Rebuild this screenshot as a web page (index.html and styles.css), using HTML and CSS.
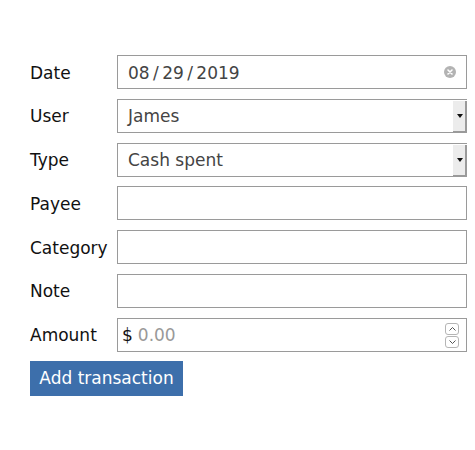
FILE: index.html
```html
<!DOCTYPE html>
<html lang="en">
<head>
<meta charset="utf-8">
<title>Add transaction</title>
<link rel="stylesheet" href="styles.css">
</head>
<body>
<form class="form">
  <div class="row">
    <label class="label">Date</label>
    <div class="field">
      <span class="value date">08 / 29 / 2019</span>
      <span class="clear">
        <svg width="12" height="12" viewBox="0 0 12 12"><circle cx="6" cy="6" r="6" fill="#b3b3b3"/><path d="M4 4L8 8M8 4L4 8" stroke="#fff" stroke-width="1.6" stroke-linecap="round"/></svg>
      </span>
    </div>
  </div>
  <div class="row">
    <label class="label">User</label>
    <div class="field select">
      <span class="value">James</span>
      <span class="drop"><span class="tri"></span></span>
    </div>
  </div>
  <div class="row">
    <label class="label">Type</label>
    <div class="field select">
      <span class="value">Cash spent</span>
      <span class="drop"><span class="tri"></span></span>
    </div>
  </div>
  <div class="row">
    <label class="label">Payee</label>
    <input class="field" type="text">
  </div>
  <div class="row">
    <label class="label">Category</label>
    <input class="field" type="text">
  </div>
  <div class="row">
    <label class="label">Note</label>
    <input class="field" type="text">
  </div>
  <div class="row">
    <label class="label">Amount</label>
    <div class="field amount">
      <span class="cur">$</span><span class="ph">0.00</span>
      <span class="spin">
        <span class="sbtn"><svg width="7" height="4" viewBox="0 0 7 4"><path d="M0.5 3.5L3.5 0.5L6.5 3.5" fill="none" stroke="#555" stroke-width="1"/></svg></span>
        <span class="sbtn"><svg width="7" height="4" viewBox="0 0 7 4"><path d="M0.5 0.5L3.5 3.5L6.5 0.5" fill="none" stroke="#555" stroke-width="1"/></svg></span>
      </span>
    </div>
  </div>
  <button class="btn" type="button">Add transaction</button>
</form>
</body>
</html>
```
FILE: styles.css
```css
html, body {
  margin: 0;
  padding: 0;
  background: #fff;
}
body {
  font-family: "DejaVu Sans", Verdana, sans-serif;
  font-size: 17px;
  color: #111;
}
.form {
  display: flex;
  flex-direction: column;
  gap: 9.8px;
  padding: 55px 0 0 30px;
  align-items: flex-start;
}
.row {
  display: flex;
  align-items: center;
  height: 34px;
}
.label {
  width: 87px;
  color: #111;
  padding-top: 1px;
}
.field {
  box-sizing: border-box;
  width: 350px;
  height: 34px;
  border: 1px solid #9a9a9a;
  background: #fff;
  display: flex;
  align-items: center;
  padding: 0 0 0 10px;
  margin: 0;
  font: inherit;
  color: #444;
  position: relative;
  outline: none;
}
.value {
  color: #444;
  padding-top: 1px;
}
.date {
  word-spacing: -2px;
}
.clear {
  position: absolute;
  right: 10px;
  top: 10px;
  width: 12px;
  height: 12px;
  display: block;
}
.clear svg { display: block; }
.select {
  border-right: none;
}
.drop {
  position: absolute;
  right: 0;
  top: 1px;
  bottom: -1px;
  width: 14px;
  background: #ececec;
  border-right: 2px solid #9a9a9a;
  border-bottom: 2px solid #9a9a9a;
  box-sizing: border-box;
  display: flex;
  align-items: center;
  justify-content: center;
}
.tri {
  width: 0;
  height: 0;
  border-left: 3px solid transparent;
  border-right: 3px solid transparent;
  border-top: 4px solid #111;
  margin-left: 1px;
}
.amount {
  padding-left: 4px;
}
.cur {
  color: #111;
  margin-right: 5px;
}
.ph {
  color: #999;
}
.spin {
  position: absolute;
  right: 7px;
  top: 4px;
  display: flex;
  flex-direction: column;
  gap: 1px;
}
.sbtn {
  box-sizing: border-box;
  width: 14px;
  height: 12px;
  border: 1px solid #b5b5b5;
  border-radius: 3px;
  display: flex;
  align-items: center;
  justify-content: center;
  background: #fff;
}
.sbtn svg { display: block; }
.btn {
  margin-top: -1px;
  width: 153px;
  height: 35px;
  background: #3d6fab;
  color: #fff;
  border: none;
  font: inherit;
  padding: 0;
  cursor: pointer;
}
```
